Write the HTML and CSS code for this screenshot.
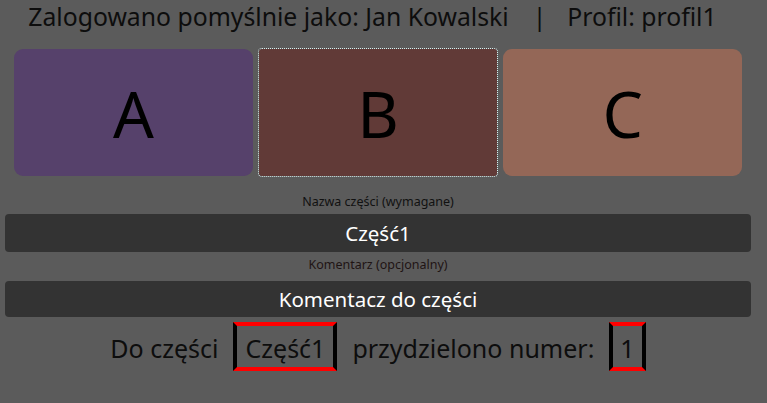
FILE: index.html
```html
<!DOCTYPE html>
<html lang="pl">
<head>
<meta charset="utf-8">
<title>Części</title>
<link rel="stylesheet" href="styles.css">
</head>
<body>
<div class="header">Zalogowano pomyślnie jako: Jan Kowalski<span class="sep">|</span>Profil: profil1</div>
<div class="cards">
  <div class="card card-a">A</div>
  <div class="card card-b">B</div>
  <div class="card card-c">C</div>
</div>
<div class="form">
  <div class="label label-1">Nazwa części (wymagane)</div>
  <div class="field field-1">Część1</div>
  <div class="label label-2">Komentarz (opcjonalny)</div>
  <div class="field field-2">Komentacz do części</div>
  <div class="summary">
    <span class="text">Do części</span>
    <span class="boxed boxed-name">Część1</span>
    <span class="text">przydzielono numer:</span>
    <span class="boxed boxed-num">1</span>
  </div>
</div>
</body>
</html>
```
FILE: styles.css
```css
html, body {
  margin: 0;
  padding: 0;
}
body {
  background: #5b5b5b;
  font-family: "Noto Sans", "Open Sans", sans-serif;
  color: #000;
  width: 767px;
  height: 403px;
  overflow: hidden;
}
.header {
  height: 49px;
  box-sizing: border-box;
  padding-top: 0;
  font-size: 24.75px;
  line-height: 34px;
  text-align: center;
  color: #0d0d0d;
  padding-left: 4px;
  padding-right: 26px;
  white-space: nowrap;
}
.sep {
  margin: 0 21px 0 24px;
}
.cards {
  display: flex;
  gap: 6px;
  padding: 0 25px 0 14px;
}
.card {
  flex: 1;
  height: 127px;
  border-radius: 9px;
  display: flex;
  align-items: center;
  justify-content: center;
  font-size: 64px;
  line-height: 1;
  color: #000;
  padding-top: 3px;
  box-sizing: border-box;
}
.card-a { background: #56416b; }
.card-b {
  background: #613a37;
  border-radius: 3px;
  outline: 1px dotted #d8f0f0;
}
.card-c { background: #946757; }
.form {
  padding: 17px 16px 0 5px;
}
.label {
  text-align: center;
  font-size: 12.5px;
  line-height: 17px;
  color: #111;
}
.label-1 {
  margin-bottom: 4px;
}
.label-2 {
  color: #1f1414;
  margin-top: 4px;
  margin-bottom: 8px;
}
.field {
  background: #333333;
  border-radius: 4px;
  color: #fff;
  text-align: center;
  font-size: 20.5px;
}
.field-1 {
  height: 38px;
  line-height: 38px;
}
.field-2 {
  height: 36px;
  line-height: 36px;
}
.summary {
  margin-top: 5px;
  display: flex;
  justify-content: center;
  align-items: baseline;
  gap: 15px;
  font-size: 25px;
  color: #0d0d0d;
}
.boxed {
  border-style: solid;
  border-width: 4px;
  border-color: #ff0000 #000000;
  height: 49px;
  box-sizing: border-box;
  padding-top: 3px;
  line-height: 38px;
}
.boxed-name {
  padding-left: 8px;
  padding-right: 8px;
}
.boxed-num {
  padding-left: 7px;
  padding-right: 7px;
}
```
